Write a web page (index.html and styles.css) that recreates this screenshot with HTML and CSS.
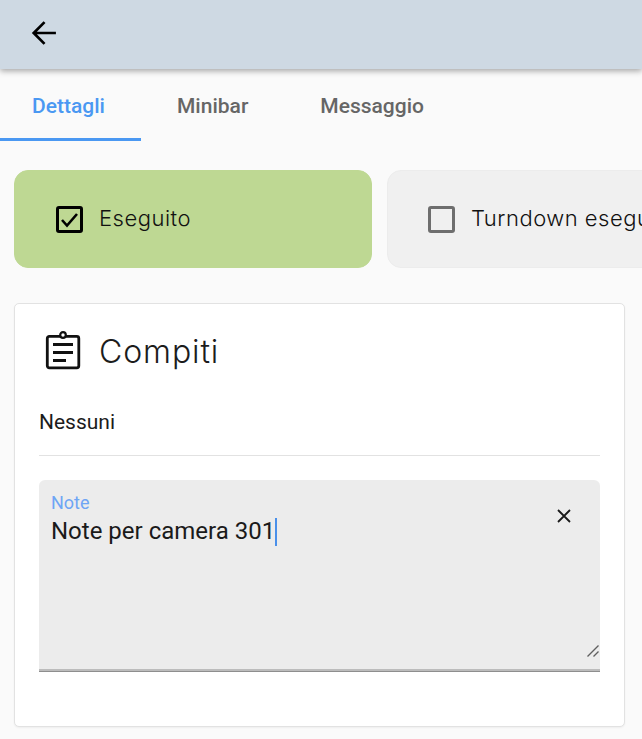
FILE: index.html
```html
<!DOCTYPE html>
<html lang="it">
<head>
<meta charset="utf-8">
<title>Camera 301</title>
<link rel="stylesheet" href="styles.css">
</head>
<body>
<header class="topbar">
  <svg class="back" viewBox="0 0 24 24" width="26" height="26"><path d="M23 12H2.500M12.500 2 2.500 12l10 10" fill="none" stroke="#000" stroke-width="2.500"/></svg>
</header>
<nav class="tabs">
  <a class="tab tab-first active">Dettagli</a>
  <a class="tab">Minibar</a>
  <a class="tab">Messaggio</a>
</nav>
<section class="toggles">
  <div class="toggle done">
    <svg class="box" viewBox="0 0 27 27" width="27" height="27"><rect x="1.500" y="1.500" width="24" height="24" rx="1.500" fill="none" stroke="#000" stroke-width="3"/><path d="M6 14l5 5.500L21 8" fill="none" stroke="#000" stroke-width="2.600"/></svg>
    <span>Eseguito</span>
  </div>
  <div class="toggle">
    <svg class="box" viewBox="0 0 27 27" width="27" height="27"><rect x="1.500" y="1.500" width="24" height="24" rx="1.500" fill="none" stroke="#6e6e6e" stroke-width="3"/></svg>
    <span>Turndown eseguito</span>
  </div>
</section>
<section class="card">
  <div class="card-head">
    <svg viewBox="0 0 36 40" width="36" height="40"><rect x="2.300" y="5.400" width="31.500" height="31.400" rx="2" fill="none" stroke="#111" stroke-width="2.800"/><circle cx="18" cy="4" r="2.800" fill="#fff" stroke="#111" stroke-width="2.200"/><path d="M8 13.500h20M8 21.500h20M8 29.500h13" fill="none" stroke="#111" stroke-width="2.800"/></svg>
    <h2>Compiti</h2>
  </div>
  <p class="none">Nessuni</p>
  <div class="field">
    <label>Note</label>
    <div class="input"><span>Note per camera 301</span><i class="caret"></i></div>
    <svg class="clear" viewBox="0 0 14 14" width="14" height="14"><path d="M1 1l12 12M13 1 1 13" fill="none" stroke="#1a1a1a" stroke-width="1.800"/></svg>
    <svg class="grip" viewBox="0 0 12 12" width="12" height="12"><path d="M.5 11.500 11.500.5M6.500 11.500l5-5" fill="none" stroke="#5f5f5f" stroke-width="1.400"/></svg>
  </div>
</section>
</body>
</html>
```
FILE: styles.css
```css
* { box-sizing: border-box; }
html, body { height: 739px; overflow: hidden; }
body {
  margin: 0;
  background: #fafafa;
  font-family: Roboto, sans-serif;
  color: #1c1c1c;
}
.topbar {
  height: 69px;
  background: #ced9e3;
  display: flex;
  align-items: center;
  padding: 0 0 3px 31px;
  box-shadow: 0 2px 6px rgba(0, 0, 0, .35);
  position: relative;
}
.tabs { display: flex; height: 72px; }
.tab {
  height: 72px;
  padding: 2px 36px 0;
  display: flex;
  align-items: center;
  font-size: 21px;
  font-weight: 500;
  color: #666;
}
.tab-first { padding: 5px 0 0 32px; width: 141px; }
.active { color: #4a98f2; border-bottom: 3px solid #4a98f2; }
.toggles {
  display: flex;
  gap: 15px;
  padding: 29px 0 0 14px;
  overflow: hidden;
}
.toggle {
  flex: 0 0 358px;
  height: 98px;
  border-radius: 14px;
  background: #f0f0f0;
  border: 1px solid #ececec;
  display: flex;
  align-items: center;
  gap: 16px;
  padding-left: 41px;
  font-family: "Inter", sans-serif;
  font-size: 22px;
  font-weight: 300;
  letter-spacing: .5px;
  color: #111;
  white-space: nowrap;
}
.toggle span { margin-top: -2px; }
.toggle + .toggle { flex-basis: 400px; padding-left: 40px; }
.done { background: #bed893; border-color: #bed893; }
.box { flex: none; }
.card {
  margin: 35px 0 0 14px;
  width: 611px;
  height: 424px;
  background: #fff;
  border: 1px solid #e2e2e2;
  border-radius: 5px;
  box-shadow: 0 1px 2px rgba(0, 0, 0, .05);
  padding: 27px 24px 0;
}
.card-head { display: flex; align-items: center; gap: 18px; padding-left: 6px; }
.card-head h2 {
  margin: 0;
  font-family: "Inter", sans-serif;
  font-size: 32px;
  font-weight: 300;
  letter-spacing: .9px;
}
.none {
  margin: 0;
  height: 85px;
  padding-top: 39px;
  font-size: 21px;
  line-height: 24px;
  border-bottom: 1px solid #e2e2e2;
}
.field {
  margin-top: 24px;
  height: 192px;
  background: #ececec;
  border-radius: 6px 6px 0 0;
  border-bottom: 1px solid #8e8e8e;
  box-shadow: inset 0 -2px 0 #bcbcbc;
  padding: 14px 12px 0;
  position: relative;
}
.field label { display: block; font-size: 18px; line-height: 18px; color: #6ea5f5; }
.input {
  margin-top: 5px;
  font-size: 24px;
  line-height: 28px;
  color: #1a1a1a;
}
.caret {
  display: inline-block;
  width: 2px;
  height: 28px;
  background: #4a90ea;
  vertical-align: -7px;
}
.clear { position: absolute; top: 29px; right: 29px; }
.grip { position: absolute; right: 1px; bottom: 14px; }
```
